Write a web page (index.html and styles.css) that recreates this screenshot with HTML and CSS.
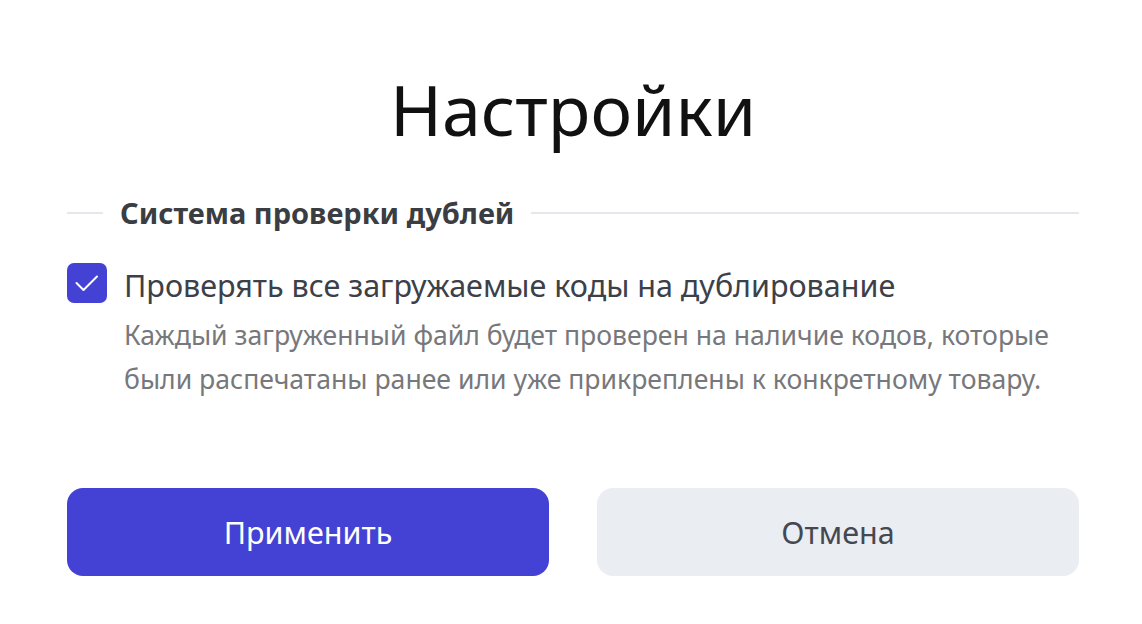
FILE: index.html
```html
<!DOCTYPE html>
<html lang="ru">
<head>
  <meta charset="UTF-8">
  <title>Настройки</title>
  <link rel="stylesheet" href="styles.css">
</head>
<body>

<div class="dialog">
  <h1 class="title">Настройки</h1>

  <div class="section-head">
    <span class="line short"></span>
    <span class="section-title">Система проверки дублей</span>
    <span class="line"></span>
  </div>

  <label class="check-row">
    <span class="checkbox">
      <svg width="40" height="40" viewBox="0 0 40 40">
        <path d="M9.5 20 L16.5 27 L30 13.5" fill="none" stroke="#fff" stroke-width="2" stroke-linecap="round" stroke-linejoin="round"/>
      </svg>
    </span>
    <span class="check-text">
      <span class="check-label">Проверять все загружаемые коды на дублирование</span>
      <span class="check-hint">Каждый загруженный файл будет проверен на наличие кодов, которые были распечатаны ранее или уже прикреплены к конкретному товару.</span>
    </span>
  </label>

  <div class="actions">
    <button class="btn btn-primary">Применить</button>
    <button class="btn btn-secondary">Отмена</button>
  </div>
</div>

</body>
</html>
```

FILE: styles.css
```css
body {
  margin: 0;
  background: #fff;
  font-family: "Noto Sans", "Open Sans", sans-serif;
}

.dialog {
  width: 1012px;
  margin-left: 67px;
  padding-top: 61px;
}

.title {
  margin: 0;
  text-align: center;
  font-size: 70px;
  font-weight: 400;
  line-height: 96px;
  color: #111;
}

.section-head {
  display: flex;
  align-items: center;
  gap: 17px;
  margin-top: 38px;
}

.line {
  flex: 1;
  height: 2px;
  background: #e4e7ec;
}

.line.short {
  flex: 0 0 36px;
}

.section-title {
  font-size: 29px;
  font-weight: 700;
  color: #3a3d42;
  line-height: 36px;
}

.check-row {
  display: flex;
  gap: 17px;
  margin-top: 32px;
}

.checkbox {
  flex: 0 0 40px;
  height: 40px;
  border-radius: 7px;
  background: #4442d4;
  display: flex;
  align-items: center;
  justify-content: center;
}

.check-text {
  display: flex;
  flex-direction: column;
}

.check-label {
  font-size: 30.5px;
  line-height: 44px;
  color: #3c4049;
}

.check-hint {
  margin-top: 6px;
  font-size: 26.6px;
  line-height: 44px;
  color: #77787b;
}

.actions {
  display: flex;
  gap: 48px;
  margin-top: 87px;
}

.btn {
  flex: 1;
  height: 88px;
  border: none;
  border-radius: 16px;
  font-family: inherit;
  font-size: 30.5px;
  cursor: pointer;
}

.btn-primary {
  background: #4442d4;
  color: #fff;
}

.btn-secondary {
  background: #eaedf2;
  color: #454850;
}
```
